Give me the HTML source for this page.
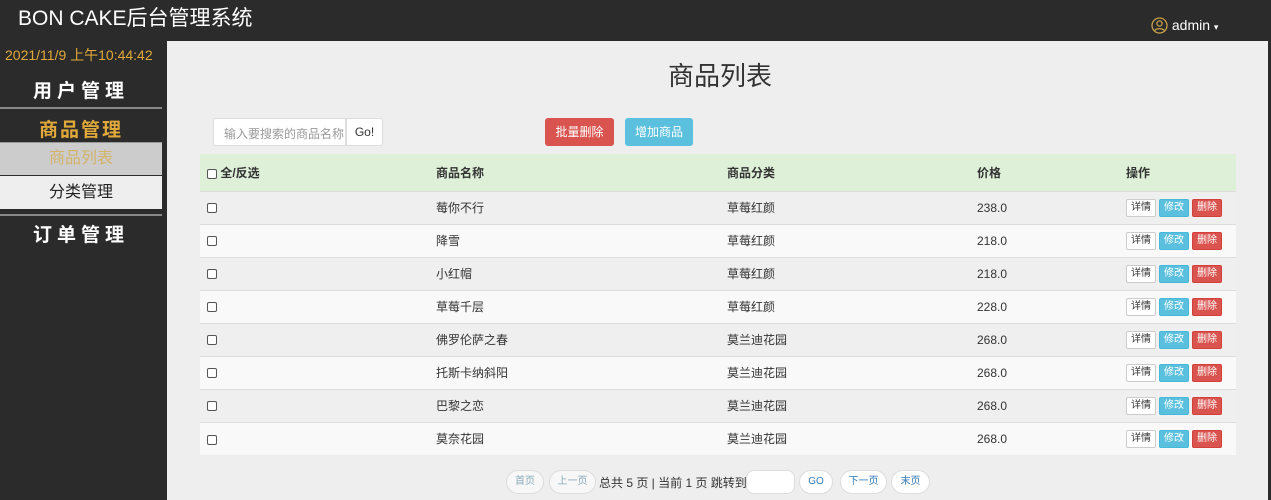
<!DOCTYPE html>
<html><head><meta charset="utf-8"><style>
*{box-sizing:border-box;margin:0;padding:0}
body{width:1271px;height:500px;overflow:hidden;background:#2b2b2b;font-family:"Liberation Sans","Noto Sans CJK SC",sans-serif;font-size:12px;color:#333;position:relative}
.top{position:absolute;left:0;top:0;width:1271px;height:40px;background:#2b2b2b}
.brand{position:absolute;left:18px;top:2px;color:#fff;font-size:21px}
.admin{position:absolute;left:1151px;top:17px;color:#fff;font-size:14px}
.side{position:absolute;left:0;top:40px;width:166px;height:460px;background:#2b2b2b}
.main{position:absolute;left:167px;top:41px;width:1101px;height:459px;background:#eee}
.abs{position:absolute}
table{position:absolute;left:200px;top:154px;width:1036px;border-collapse:collapse}
td{height:33px;font-size:12px;padding:0;vertical-align:middle}
tr.h td{height:37px;background:#dff0d8;font-weight:bold}
tr.a td{background:#efefef;border-top:1px solid #ddd}
tr.b td{background:#f9f9f9;border-top:1px solid #ddd}
.cb{display:inline-block;width:10px;height:10px;border:1px solid #555;border-radius:2px;background:#fff;vertical-align:middle;margin-left:7px}
.btn{display:inline-block;vertical-align:middle;font-size:10px;width:30px;text-align:center;height:18px;line-height:16px;border-radius:2px;border:1px solid #ccc;background:#fff;color:#333;margin-right:3px}
.i{background:#5bc0de;border-color:#46b8da;color:#fff}
.d{background:#d9534f;border-color:#d43f3a;color:#fff}
.pg{position:absolute;top:470px;height:24px;line-height:22px;border:1px solid #ddd;border-radius:12px;background:#fff;color:#337ab7;font-size:10px;text-align:center}
</style></head><body>
<div class="top"><div class="brand">BON CAKE后台管理系统</div>
<div class="admin"><svg width="17" height="17" viewBox="0 0 17 17" style="vertical-align:-4px"><circle cx="8.5" cy="8.5" r="7.5" fill="none" stroke="#c9a04a" stroke-width="1.3"/><circle cx="8.5" cy="6.5" r="2.6" fill="none" stroke="#c9a04a" stroke-width="1.3"/><path d="M3.5 14c1-3 9-3 10 0" fill="none" stroke="#c9a04a" stroke-width="1.3"/></svg> admin <span style="font-size:9px">▾</span></div></div>
<div class="side">
<div class="abs" style="left:5px;top:5px;color:#e0a93a;font-size:14px">2021/11/9 上午10:44:42</div>
<div class="abs" style="left:0;top:36px;width:162px;text-align:center;color:#fff;font-size:19px;font-weight:bold;letter-spacing:5px">用户管理</div>
<div class="abs" style="left:0;top:67px;width:162px;height:2px;background:#888"></div>
<div class="abs" style="left:0;top:75px;width:162px;text-align:center;color:#e0a93a;font-size:19px;font-weight:bold;letter-spacing:2px">商品管理</div>
<div class="abs" style="left:0;top:102px;width:162px;height:33px;background:#ccc;border-top:1px solid #999;text-align:center;line-height:32px;color:#d4b36a;font-size:16px">商品列表</div>
<div class="abs" style="left:0;top:136px;width:162px;height:33px;background:#eee;text-align:center;line-height:33px;color:#222;font-size:16px">分类管理</div>
<div class="abs" style="left:0;top:174px;width:162px;height:2px;background:#888"></div>
<div class="abs" style="left:0;top:180px;width:162px;text-align:center;color:#fff;font-size:19px;font-weight:bold;letter-spacing:5px">订单管理</div>
</div>
<div class="main"></div>
<div class="abs" style="left:668px;top:56px;font-size:26px;color:#333">商品列表</div>
<div class="abs" style="left:213px;top:118px;width:133px;height:28px;background:#fff;border:1px solid #ddd;border-radius:3px 0 0 3px;padding:6px 10px;color:#999;font-size:12px;white-space:nowrap;overflow:hidden">输入要搜索的商品名称</div>
<div class="abs" style="left:346px;top:118px;width:37px;height:28px;background:#fff;border:1px solid #ddd;border-radius:0 3px 3px 0;text-align:center;line-height:26px;font-size:12px">Go!</div>
<div class="abs" style="left:545px;top:118px;width:69px;height:28px;background:#d9534f;border-radius:3px;color:#fff;text-align:center;line-height:28px">批量删除</div>
<div class="abs" style="left:625px;top:118px;width:68px;height:28px;background:#5bc0de;border-radius:3px;color:#fff;text-align:center;line-height:28px">增加商品</div>
<table>
<tr class="h"><td style="width:236px"><span class="cb" style="margin-left:7px"></span> 全/反选</td><td style="width:291px">商品名称</td><td style="width:250px">商品分类</td><td style="width:149px">价格</td><td>操作</td></tr>
<tr class="a"><td><span class="cb"></span></td><td>莓你不行</td><td>草莓红颜</td><td>238.0</td><td><span class="btn">详情</span><span class="btn i">修改</span><span class="btn d">删除</span></td></tr>
<tr class="b"><td><span class="cb"></span></td><td>降雪</td><td>草莓红颜</td><td>218.0</td><td><span class="btn">详情</span><span class="btn i">修改</span><span class="btn d">删除</span></td></tr>
<tr class="a"><td><span class="cb"></span></td><td>小红帽</td><td>草莓红颜</td><td>218.0</td><td><span class="btn">详情</span><span class="btn i">修改</span><span class="btn d">删除</span></td></tr>
<tr class="b"><td><span class="cb"></span></td><td>草莓千层</td><td>草莓红颜</td><td>228.0</td><td><span class="btn">详情</span><span class="btn i">修改</span><span class="btn d">删除</span></td></tr>
<tr class="a"><td><span class="cb"></span></td><td>佛罗伦萨之春</td><td>莫兰迪花园</td><td>268.0</td><td><span class="btn">详情</span><span class="btn i">修改</span><span class="btn d">删除</span></td></tr>
<tr class="b"><td><span class="cb"></span></td><td>托斯卡纳斜阳</td><td>莫兰迪花园</td><td>268.0</td><td><span class="btn">详情</span><span class="btn i">修改</span><span class="btn d">删除</span></td></tr>
<tr class="a"><td><span class="cb"></span></td><td>巴黎之恋</td><td>莫兰迪花园</td><td>268.0</td><td><span class="btn">详情</span><span class="btn i">修改</span><span class="btn d">删除</span></td></tr>
<tr class="b"><td><span class="cb"></span></td><td>莫奈花园</td><td>莫兰迪花园</td><td>268.0</td><td><span class="btn">详情</span><span class="btn i">修改</span><span class="btn d">删除</span></td></tr>
</table>
<div class="pg" style="left:506px;width:38px;background:#f7f7f7;color:#8ab">首页</div>
<div class="pg" style="left:549px;width:47px;background:#f7f7f7;color:#8ab">上一页</div>
<div class="abs" style="left:599px;top:474px;font-size:12px;color:#333">总共 5 页 | 当前 1 页 跳转到</div>
<div class="pg" style="left:746px;width:49px;border-radius:8px"></div>
<div class="pg" style="left:799px;width:34px">GO</div>
<div class="pg" style="left:840px;width:47px">下一页</div>
<div class="pg" style="left:891px;width:39px">末页</div>
</body></html>
